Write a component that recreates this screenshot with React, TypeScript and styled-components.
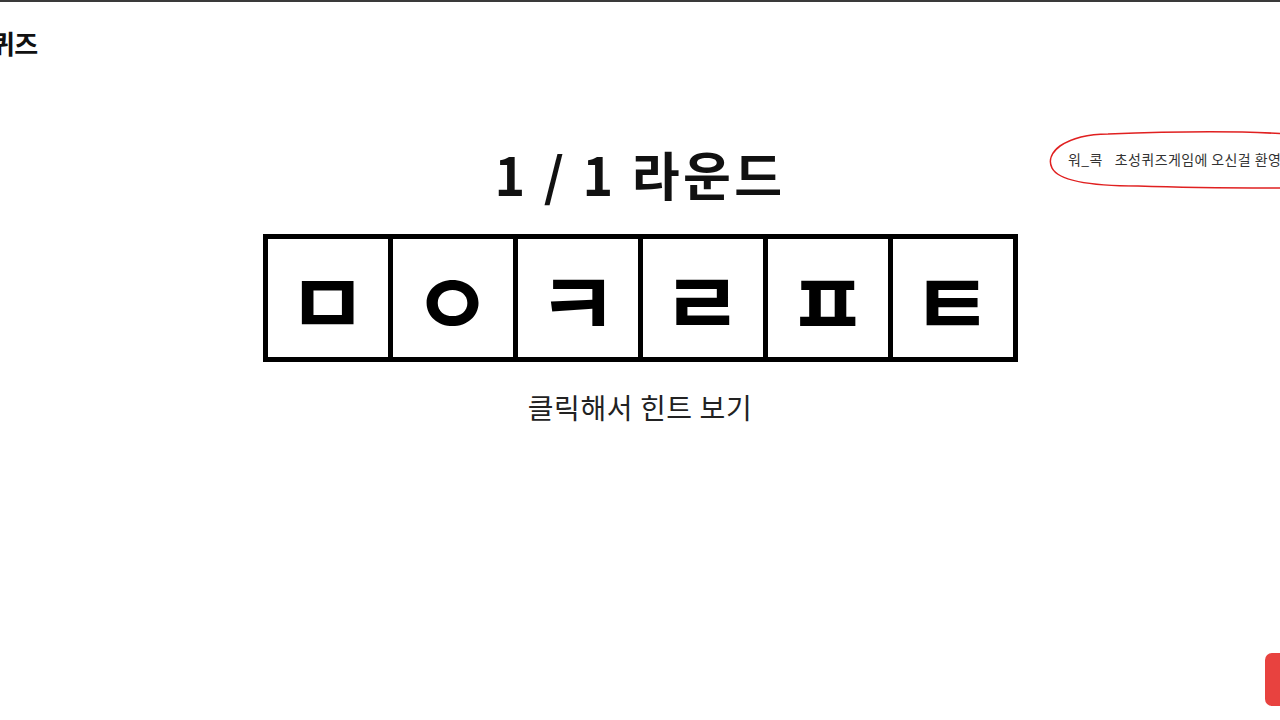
import React from "react";
import styled, { createGlobalStyle } from "styled-components";

const GlobalStyle = createGlobalStyle`
  html, body { margin: 0; padding: 0; background: #fff; }
  body { font-family: "Noto Sans CJK KR", "Noto Sans", sans-serif; color: #111; }
`;

const Page = styled.div`
  position: relative;
  width: 1280px;
  height: 720px;
  box-sizing: border-box;
  border-top: 2px solid #3a3a3a;
  overflow: hidden;
`;

const Header = styled.header`
  height: 80px;
  display: flex;
  align-items: center;
  box-sizing: border-box;
`;

const Brand = styled.h1`
  margin: 0 0 0 -56px;
  font-size: 26px;
  font-weight: 700;
  letter-spacing: -0.5px;
  color: #111;
`;

const Main = styled.main`
  display: flex;
  flex-direction: column;
  align-items: center;
  padding-top: 55px;
`;

const RoundTitle = styled.h2`
  margin: 0;
  font-size: 52px;
  font-weight: 700;
  line-height: 74px;
  letter-spacing: 3.4px;
  color: #111;
`;

const Board = styled.div`
  display: flex;
  margin-top: 23px;
  border: 5px solid #000;
  border-left: none;
`;

const Cell = styled.div`
  width: 120px;
  height: 118px;
  border-left: 5px solid #000;
  display: flex;
  align-items: center;
  justify-content: center;
  font-size: 88px;
  font-weight: 700;
  color: #000;
  line-height: 1;
`;

const Hint = styled.button`
  margin-top: 25px;
  border: none;
  background: none;
  padding: 0;
  font-family: inherit;
  font-size: 28px;
  font-weight: 400;
  letter-spacing: 0.6px;
  color: #222;
  cursor: pointer;
`;

const Notice = styled.div`
  position: absolute;
  top: 126px;
  left: 1048px;
  width: 280px;
  height: 64px;
`;

const NoticeText = styled.span`
  position: absolute;
  left: 20px;
  top: 21px;
  white-space: nowrap;
  font-size: 14px;
  color: #333;
  letter-spacing: 0.4px;
`;

const Gap = styled.span`
  display: inline-block;
  width: 12px;
`;

const Scribble = styled.svg`
  position: absolute;
  inset: 0;
  overflow: visible;
`;

const FloatButton = styled.button`
  position: absolute;
  left: 1265px;
  top: 651px;
  width: 60px;
  height: 53px;
  border: none;
  border-radius: 7px;
  background: #e8423f;
`;

const letters = ["ㅁ", "ㅇ", "ㅋ", "ㄹ", "ㅍ", "ㅌ"];

export default function App() {
  return (
    <>
      <GlobalStyle />
      <Page>
        <Header>
          <Brand>초성퀴즈</Brand>
        </Header>
        <Main>
          <RoundTitle>1 / 1 라운드</RoundTitle>
          <Board>
            {letters.map((l, i) => (
              <Cell key={i}>{l}</Cell>
            ))}
          </Board>
          <Hint>클릭해서 힌트 보기</Hint>
        </Main>
        <Notice>
          <Scribble viewBox="0 0 280 64" width="280" height="64">
            <path
              d="M240 6 C180 2 110 4 60 6 C40 6 24 10 12 18 C4 24 0 32 4 40 C10 52 40 58 90 58 C150 60 210 60 240 60"
              fill="none"
              stroke="#e02020"
              strokeWidth="1.6"
              strokeLinecap="round"
            />
          </Scribble>
          <NoticeText>
            워_콕<Gap />초성퀴즈게임에 오신걸 환영합니다
          </NoticeText>
        </Notice>
        <FloatButton aria-label="action" />
      </Page>
    </>
  );
}
